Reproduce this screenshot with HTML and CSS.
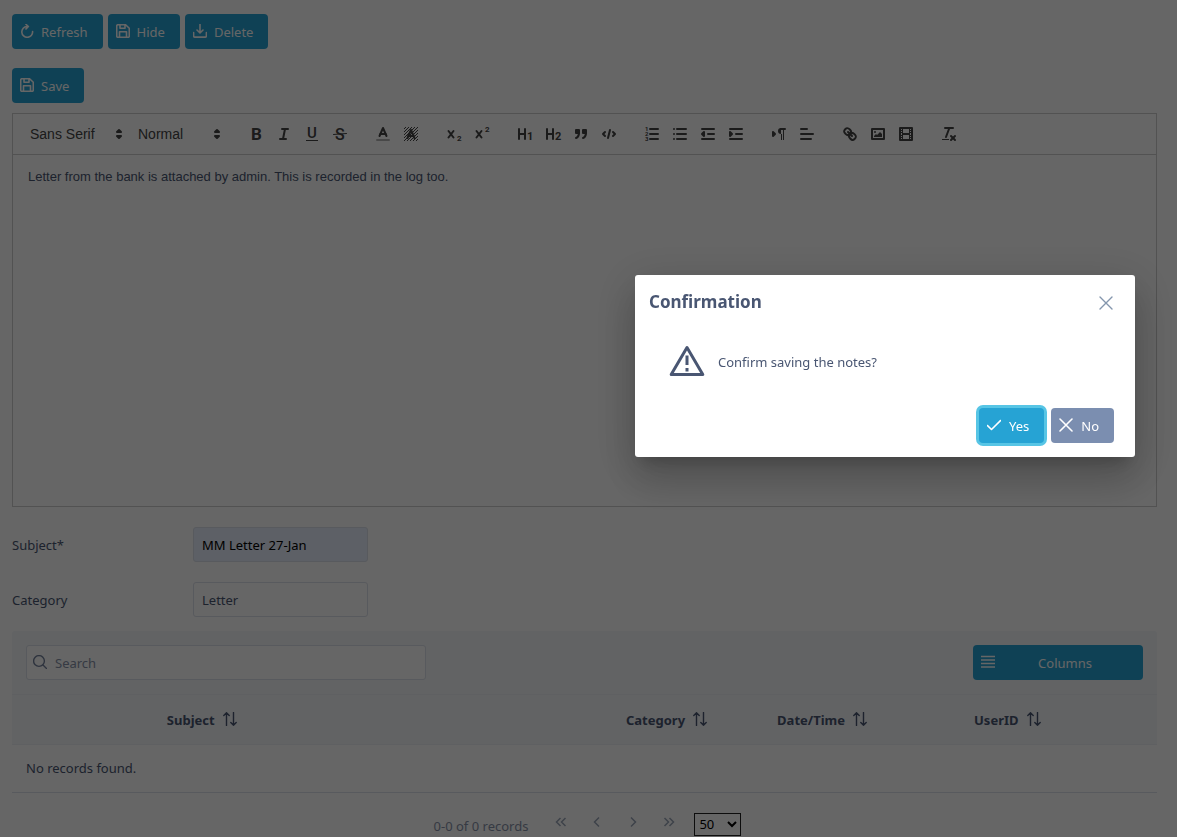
FILE: index.html
```
<!DOCTYPE html>
<html lang="en">
<head>
    <meta charset="UTF-8">
    <meta name="viewport" content="width=device-width, initial-scale=1.0">
    <title>Notes</title>
    <link rel="stylesheet" href="styles.css">
</head>

<body>
    <!-- shared icons -->
    <svg class="sprite" aria-hidden="true">
        <symbol id="save" viewBox="0 0 14 14">
            <path d="M2 .7h7.600l3.700 3.600v7.700a1.300 1.300 0 0 1-1.300 1.300H2A1.300 1.300 0 0 1 .7 12V2A1.300 1.300 0 0 1 2 .7zM3.500 13V7.700h7V13M4 1v3.200h5V1"/>
        </symbol>
        <symbol id="sort" viewBox="0 0 14 14">
            <path d="M3.500 13.500V.7M.8 3.400L3.500.7l2.700 2.700M10.500.5v12.800M7.800 10.600l2.700 2.700 2.700-2.700"/>
        </symbol>
        <symbol id="close" viewBox="0 0 14 14">
            <path d="M1 1l12 12M13 1L1 13"/>
        </symbol>
        <symbol id="updown" viewBox="0 0 18 18">
            <polygon points="7 11 9 13 11 11 7 11"/>
            <polygon points="7 7 9 5 11 7 7 7"/>
        </symbol>
    </svg>

    <main class="page">
        <div class="buttons">
            <button class="btn"><svg class="icon" viewBox="0 0 14 14"><path d="M7.500 2.500H7A5.400 5.400 0 1 0 12.600 7.500M6 .4l2.400 2.100L6 4.900"/></svg>Refresh</button>
            <button class="btn"><svg class="icon"><use href="#save"/></svg>Hide</button>
            <button class="btn"><svg class="icon" viewBox="0 0 14 14"><path d="M7 .2v8.600M4 6l3 3 3-3M.6 8.500v3.300a1.300 1.300 0 0 0 1.300 1.300h10.200a1.300 1.300 0 0 0 1.300-1.300V8.500"/></svg>Delete</button>
        </div>
        <div class="buttons">
            <button class="btn"><svg class="icon"><use href="#save"/></svg>Save</button>
        </div>

        <div class="editor">
            <div class="toolbar">
                <div class="formats">
                    <button class="picker font">Sans Serif<svg><use href="#updown"/></svg></button>
                    <button class="picker header">Normal<svg><use href="#updown"/></svg></button>
                </div>
                <div class="formats">
                    <button aria-label="Bold"><svg viewBox="0 0 18 18"><text class="letter" x="4" y="15" font-size="17">B</text></svg></button>
                    <button aria-label="Italic"><svg viewBox="0 0 18 18"><line x1="7" x2="13" y1="4" y2="4"/><line x1="5" x2="11" y1="14" y2="14"/><line x1="8" x2="10" y1="14" y2="4"/></svg></button>
                    <button aria-label="Underline"><svg viewBox="0 0 18 18"><text class="letter thin" x="4" y="13" font-size="15">U</text><rect class="fill" x="3" y="15" width="12" height="1"/></svg></button>
                    <button aria-label="Strike"><svg viewBox="0 0 18 18"><text class="letter thin" x="4" y="15" font-size="16">S</text><line class="hair" x1="2.500" x2="15.500" y1="9.500" y2="8.500"/></svg></button>
                </div>
                <div class="formats">
                    <button aria-label="Color"><svg viewBox="0 0 18 18"><line class="faint" x1="3" x2="15" y1="15" y2="15"/><polyline points="5.500 11 9 3 12.500 11"/><line x1="11.630" x2="6.380" y1="9" y2="9"/></svg></button>
                    <button aria-label="Background"><svg viewBox="0 0 18 18">
                        <pattern id="hatch" width="3" height="3" patternUnits="userSpaceOnUse"><path class="fill" d="M2 0h1v1H2zM1 1h1v1H1zM0 2h1v1H0z"/></pattern>
                        <rect x="2" y="2" width="14" height="14" fill="url(#hatch)" stroke="none"/>
                        <polyline points="5.500 13 9 5 12.500 13"/><line x1="11.630" x2="6.380" y1="11" y2="11"/></svg></button>
                </div>
                <div class="formats">
                    <button aria-label="Subscript"><svg viewBox="0 0 18 18"><line x1="3.500" y1="6" x2="8.500" y2="12.500"/><line x1="8.500" y1="6" x2="3.500" y2="12.500"/><text class="letter" x="12" y="16" font-size="8">2</text></svg></button>
                    <button aria-label="Superscript"><svg viewBox="0 0 18 18"><line x1="3.500" y1="6" x2="8.500" y2="12.500"/><line x1="8.500" y1="6" x2="3.500" y2="12.500"/><text class="letter" x="12" y="7" font-size="8">2</text></svg></button>
                </div>
                <div class="formats">
                    <button aria-label="Heading 1"><svg viewBox="0 0 18 18"><line x1="3" y1="4" x2="3" y2="14"/><line x1="9" y1="4" x2="9" y2="14"/><line x1="3" y1="9" x2="9" y2="9"/><text class="letter" x="11" y="15" font-size="11">1</text></svg></button>
                    <button aria-label="Heading 2"><svg viewBox="0 0 18 18"><line x1="3" y1="4" x2="3" y2="14"/><line x1="9" y1="4" x2="9" y2="14"/><line x1="3" y1="9" x2="9" y2="9"/><text class="letter" x="11" y="15" font-size="11">2</text></svg></button>
                    <button aria-label="Blockquote"><svg viewBox="0 0 18 18"><rect class="solid" x="4" y="5" width="3" height="3"/><rect class="solid" x="11" y="5" width="3" height="3"/><path class="solid" d="M7,8c0,4.031-3,5-3,5M14,8c0,4.031-3,5-3,5"/></svg></button>
                    <button aria-label="Code"><svg viewBox="0 0 18 18"><polyline points="5 7 3 9 5 11"/><polyline points="13 7 15 9 13 11"/><line x1="10" x2="8" y1="5" y2="13"/></svg></button>
                </div>
                <div class="formats">
                    <button aria-label="Ordered list"><svg viewBox="0 0 18 18"><path d="M7 4h8M7 9h8M7 14h8"/><text class="digit" x="2" y="6">1</text><text class="digit" x="2" y="11">2</text><text class="digit" x="2" y="16">3</text></svg></button>
                    <button aria-label="Bullet list"><svg viewBox="0 0 18 18"><path d="M6 4h9M6 9h9M6 14h9M3 4h0M3 9h0M3 14h0"/></svg></button>
                    <button aria-label="Outdent"><svg viewBox="0 0 18 18"><path d="M3 14h12M3 4h12M9 9h6"/><polygon class="solid" points="5 7 5 11 3 9"/></svg></button>
                    <button aria-label="Indent"><svg viewBox="0 0 18 18"><path d="M3 14h12M3 4h12M9 9h6"/><polygon class="solid" points="3 7 3 11 5 9"/></svg></button>
                </div>
                <div class="formats">
                    <button aria-label="Direction"><svg viewBox="0 0 18 18"><polygon class="solid" points="3 11 5 9 3 7"/><path d="M15 4h-4"/><path class="fill" d="M11,3a3,3,0,0,0,0,6h1V3H11ZM11 4h1v11h-1zM13 4h1v11h-1z"/></svg></button>
                    <button aria-label="Align"><svg viewBox="0 0 18 18"><path d="M3 9h12M3 14h10M3 4h6"/></svg></button>
                </div>
                <div class="formats">
                    <button aria-label="Link"><svg viewBox="0 0 18 18"><path d="M7 7l4 4M8.900,4.577a3.476,3.476,0,0,1,.36,4.679A3.476,3.476,0,0,1,4.577,8.900C3.185,7.500,2.035,6.400,4.217,4.217S7.500,3.185,8.900,4.577ZM13.423,9.100a3.476,3.476,0,0,0-4.679-.36,3.476,3.476,0,0,0,.36,4.679c1.392,1.392,2.500,2.542,4.679.36S14.815,10.500,13.423,9.100Z"/></svg></button>
                    <button aria-label="Image"><svg viewBox="0 0 18 18"><rect x="3" y="4" width="12" height="10"/><circle class="fill" cx="6" cy="7" r="1"/><polyline class="fill" points="5 12 5 11 7 9 8 10 11 7 13 9 13 12 5 12"/></svg></button>
                    <button aria-label="Video"><svg viewBox="0 0 18 18"><rect x="3" y="3" width="12" height="12"/><path class="fill" d="M5 3h1v12H5zM12 3h1v12h-1zM5 8h8v2H5zM3 5h3v1H3zM3 7h3v1H3zM3 10h3v1H3zM3 12h3v1H3zM12 5h3v1h-3zM12 7h3v1h-3zM12 10h3v1h-3zM12 12h3v1h-3z"/></svg></button>
                </div>
                <div class="formats">
                    <button aria-label="Clear formatting"><svg viewBox="0 0 18 18"><line x1="5" x2="13" y1="3" y2="3"/><line x1="6" x2="9.350" y1="12" y2="3"/><line x1="11" x2="15" y1="11" y2="15"/><line x1="15" x2="11" y1="11" y2="15"/><rect class="fill" x="2" y="14" width="7" height="1"/></svg></button>
                </div>
            </div>
            <div class="content" contenteditable="true" spellcheck="false">Letter from the bank is attached by admin. This is recorded in the log too.</div>
        </div>

        <div class="field">
            <label for="subject">Subject*</label>
            <input type="text" id="subject" class="filled" value="MM Letter 27-Jan">
        </div>
        <div class="field">
            <label for="category">Category</label>
            <input type="text" id="category" value="Letter">
        </div>

        <div class="table-top">
            <div class="search">
                <svg class="icon" viewBox="0 0 14 14"><circle cx="6" cy="6" r="5.400"/><path d="M10 10l3.600 3.600"/></svg>
                <input type="text" placeholder="Search" aria-label="Search">
            </div>
            <button class="btn columns"><svg class="icon" viewBox="0 0 14 14"><path d="M0 1.500h14M0 5h14M0 8.500h14M0 12h14"/></svg><span>Columns</span></button>
        </div>
        <table>
            <thead>
                <tr>
                    <th class="c-blank"></th>
                    <th class="c-subject">Subject<svg class="icon"><use href="#sort"/></svg></th>
                    <th class="c-category">Category<svg class="icon"><use href="#sort"/></svg></th>
                    <th class="c-date">Date/Time<svg class="icon"><use href="#sort"/></svg></th>
                    <th class="c-user">UserID<svg class="icon"><use href="#sort"/></svg></th>
                </tr>
            </thead>
            <tbody>
                <tr><td colspan="5">No records found.</td></tr>
            </tbody>
        </table>

        <div class="pager">
            <span>0-0 of 0 records</span>
            <div class="pages">
                <button aria-label="First page"><svg viewBox="0 0 12 12"><path d="M5.500 2L1.500 6l4 4M10.500 2l-4 4 4 4"/></svg></button>
                <button aria-label="Previous page"><svg viewBox="0 0 12 12"><path d="M8 1.500L3.500 6 8 10.500"/></svg></button>
                <button aria-label="Next page"><svg viewBox="0 0 12 12"><path d="M4 1.500L8.500 6 4 10.500"/></svg></button>
                <button aria-label="Last page"><svg viewBox="0 0 12 12"><path d="M1.500 2l4 4-4 4M6.500 2l4 4-4 4"/></svg></button>
            </div>
            <select aria-label="Rows per page">
                <option>50</option>
                <option>100</option>
            </select>
        </div>
    </main>

    <div class="mask">
        <div class="dialog" role="dialog" aria-labelledby="dialog-title">
            <div class="dialog-header">
                <h2 id="dialog-title">Confirmation</h2>
                <button class="close" aria-label="Close"><svg class="icon"><use href="#close"/></svg></button>
            </div>
            <div class="dialog-content">
                <svg viewBox="0 0 36 32"><path d="M18 2.500L33.800 29.500H2.200zM18 10.500v9.500M18 23v3.500"/></svg>
                <p>Confirm saving the notes?</p>
            </div>
            <div class="dialog-footer">
                <button class="btn yes"><svg class="icon" viewBox="0 0 14 14"><path d="M.5 7.500L4.500 11.500 13.500 2.500"/></svg>Yes</button>
                <button class="btn no"><svg class="icon"><use href="#close"/></svg>No</button>
            </div>
        </div>
    </div>
</body>

</html>
```
FILE: styles.css
```
*{
    box-sizing: border-box;
}
body{
    margin: 0;
    height: 100vh;
    overflow: hidden;
    font-family: 'Noto Sans', sans-serif;
    font-size: 13px;
    line-height: 20px;
    color: #495672;
    background: #fff;
}
button, input, select{
    font: inherit;
    color: inherit;
}
button{
    cursor: pointer;
}
.sprite{
    display: none;
}
.icon{
    width: 14px;
    height: 14px;
    flex: none;
    fill: none;
    stroke: currentColor;
    stroke-width: 1.4;
    stroke-linecap: round;
    stroke-linejoin: round;
}
.page{
    padding: 14px 20px 0 12px;
}

/* buttons */
.buttons{
    display: flex;
    gap: 5px;
    margin-bottom: 19px;
}
.buttons + .buttons{
    margin-bottom: 10px;
}
.btn{
    display: flex;
    align-items: center;
    gap: 7px;
    height: 35px;
    padding: 0 15px 0 8px;
    border: 0;
    border-radius: 4px;
    background: #26a3d4;
    color: #fff;
}
.btn .icon{
    margin-bottom: 2px;
    stroke-width: 1.6;
}

/* editor */
.editor{
    border: 1px solid #ccc;
    margin-bottom: 20px;
    font-family: 'Liberation Sans', sans-serif;
}
.toolbar{
    display: flex;
    gap: 15px;
    padding: 8px;
    border-bottom: 1px solid #ccc;
}
.formats{
    display: flex;
}
.formats button{
    width: 28px;
    height: 24px;
    padding: 3px 5px;
    border: 0;
    background: none;
    color: #444;
}
.formats svg{
    display: block;
    width: 18px;
    height: 18px;
    fill: none;
    stroke: #444;
    stroke-width: 2;
    stroke-linecap: round;
    stroke-linejoin: round;
}
.formats .picker{
    display: flex;
    align-items: center;
    justify-content: space-between;
    padding: 0 1px 0 9px;
    font-size: 14px;
    font-weight: 500;
}
.formats .font{
    width: 108px;
}
.formats .header{
    width: 98px;
}
.formats .fill{
    fill: #444;
    stroke: none;
}
.formats .solid{
    fill: #444;
}
.formats .hair{
    stroke-width: 1;
}
.formats .faint{
    opacity: 0.4;
}
.letter, .digit{
    font-family: Roboto, sans-serif;
    font-weight: 700;
    fill: #444;
    stroke: none;
}
.thin{
    font-weight: 500;
}
.digit{
    font-size: 6px;
}
.content{
    height: 351px;
    padding: 12px 15px;
    line-height: 20px;
    outline: 0;
}

/* form */
.field{
    display: flex;
    align-items: center;
    margin-bottom: 20px;
}
.field label{
    width: 181px;
}
.field input{
    width: 175px;
}
.field input, .search input{
    height: 35px;
    padding: 0 8px;
    border: 1px solid #dbe0ea;
    border-radius: 3px;
    background: #fff;
    outline: 0;
}
.field .filled{
    background: #e8f0fe;
    color: #000;
}

/* table */
.table-top{
    display: flex;
    justify-content: space-between;
    margin-top: -6px;
    padding: 14px;
    background: #f4f7fa;
    border-bottom: 1px solid #eef1f5;
    border-radius: 3px 3px 0 0;
}
.search{
    position: relative;
    width: 400px;
}
.search input{
    width: 100%;
    padding-left: 28px;
}
.search input::placeholder{
    color: #8792a8;
}
.search .icon{
    position: absolute;
    left: 7px;
    top: 10px;
    color: #74819b;
}
.columns{
    width: 170px;
}
.columns span{
    flex: 1;
    text-align: center;
}
table{
    width: 100%;
    table-layout: fixed;
    border-collapse: collapse;
}
th{
    height: 49px;
    padding: 2px 14px 0;
    text-align: left;
    background: #f4f7fa;
    border-bottom: 1px solid #eef1f5;
}
th .icon{
    margin-left: 8px;
    vertical-align: -1px;
}
td{
    height: 48px;
    padding: 0 14px;
    border-bottom: 1px solid #dbe0ea;
}
.c-blank{
    width: 12.3%;
}
.c-subject{
    width: 40.1%;
}
.c-category{
    width: 13.2%;
}
.c-date, .c-user{
    width: 17.2%;
}
.pager{
    display: flex;
    justify-content: center;
    padding: 20px 0 0 6px;
    color: #8792a8;
}
.pager span{
    padding-top: 3px;
}
.pages{
    display: flex;
    margin: 0 7px 0 15px;
}
.pages button{
    width: 36px;
    height: 18px;
    padding: 0;
    border: 0;
    background: none;
}
.pages svg{
    width: 12px;
    height: 12px;
    fill: none;
    stroke: #9ba5b8;
    stroke-width: 1.5;
}
.pager select{
    width: 47px;
    height: 23px;
    padding: 0;
    border: 1px solid #222;
    background: #fff;
    color: #000;
}

/* confirmation */
.mask{
    position: fixed;
    inset: 0;
    background: rgba(0, 0, 0, 0.6);
}
.dialog{
    position: absolute;
    top: 275px;
    right: 42px;
    width: 500px;
    border-radius: 3px;
    background: #fff;
    box-shadow: 0 11px 15px -7px rgba(0,0,0,0.2), 0 24px 38px 3px rgba(0,0,0,0.14), 0 9px 46px 8px rgba(0,0,0,0.12);
}
.dialog-header{
    display: flex;
    justify-content: space-between;
    padding: 14px 15px 0 14px;
}
.dialog-header h2{
    margin: 0;
    font-size: 17px;
    line-height: 26px;
}
.close{
    display: flex;
    align-items: center;
    justify-content: center;
    width: 28px;
    height: 28px;
    padding: 0;
    border: 0;
    background: none;
    color: #8496ad;
}
.dialog-content{
    display: flex;
    align-items: center;
    gap: 13px;
    padding: 28px 34px 31px;
}
.dialog-content svg{
    width: 36px;
    height: 32px;
    fill: none;
    stroke: #495672;
    stroke-width: 3;
    stroke-linejoin: round;
}
.dialog-content p{
    margin: 2px 0 0;
}
.dialog-footer{
    display: flex;
    justify-content: flex-end;
    gap: 7px;
    padding: 0 21px 14px;
}
.dialog-footer .btn{
    gap: 8px;
}
.yes{
    box-shadow: 0 0 0 3px #57c5e5;
}
.no{
    background: #7b8eb0;
}
```
